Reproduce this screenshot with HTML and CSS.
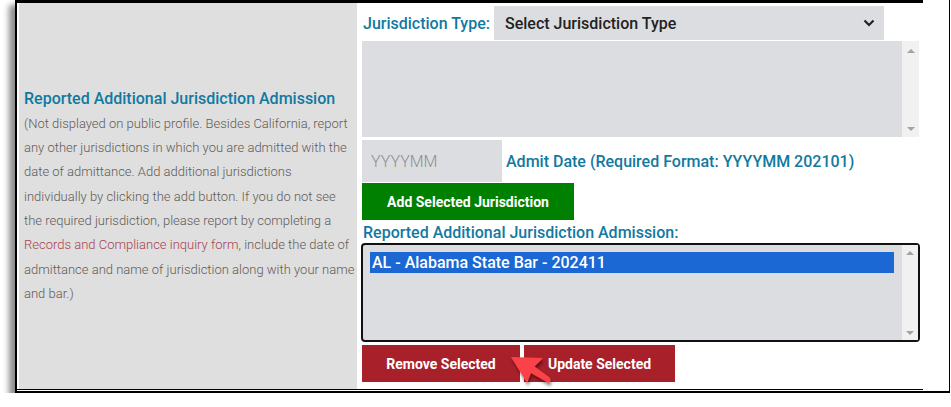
FILE: index.html
```html
<!DOCTYPE html>
<html lang="en">
<head>
    <meta charset="UTF-8">
    <meta name="viewport" content="width=device-width, initial-scale=1.0">
    <title>Additional Jurisdiction Admission</title>
    <link rel="stylesheet" href="styles.css">
</head>
<body>
    <div class="frame">
        <div class="form-table">
            <div class="form-row">
                <div class="info-cell">
                    <div class="info-title">Reported Additional Jurisdiction Admission</div>
                    <div class="info-text">
                        (Not displayed on public profile. Besides California, report any other jurisdictions in which you are admitted with the date of admittance. Add additional jurisdictions individually by clicking the add button. If you do not see the required jurisdiction, please report by completing a <a href="#" class="info-link">Records and Compliance inquiry form,</a> include the date of admittance and name of jurisdiction along with your name and bar.)
                    </div>
                </div>

                <div class="field-cell">
                    <div class="type-row">
                        <label class="field-label">Jurisdiction Type:</label>
                        <div class="fake-select">
                            <span>Select Jurisdiction Type</span>
                            <svg class="chevron" width="12" height="8" viewBox="0 0 12 8">
                                <path d="M1.5 1.5 L6 6 L10.5 1.5" fill="none" stroke="#222" stroke-width="2.2"/>
                            </svg>
                        </div>
                    </div>

                    <div class="listbox listbox-empty">
                        <div class="list-items"></div>
                        <div class="scroll-track">
                            <span class="arrow-up"></span>
                            <span class="arrow-down"></span>
                        </div>
                    </div>

                    <div class="date-row">
                        <input class="date-input" type="text" placeholder="YYYYMM">
                        <span class="field-label">Admit Date (Required Format: YYYYMM 202101)</span>
                    </div>

                    <button class="btn btn-green">Add Selected Jurisdiction</button>

                    <div class="field-label list-label">Reported Additional Jurisdiction Admission:</div>

                    <div class="listbox listbox-chosen">
                        <div class="list-items">
                            <div class="list-option selected">AL - Alabama State Bar - 202411</div>
                        </div>
                        <div class="scroll-track">
                            <span class="arrow-up"></span>
                            <span class="arrow-down"></span>
                        </div>
                    </div>

                    <div class="btn-row">
                        <button class="btn btn-red btn-remove">Remove Selected</button>
                        <button class="btn btn-red btn-update">Update Selected</button>
                        <svg class="pointer" width="52" height="42" viewBox="0 0 52 42">
                            <defs>
                                <filter id="arrowShadow" x="-30%" y="-30%" width="160%" height="160%">
                                    <feDropShadow dx="1" dy="3" stdDeviation="1.6" flood-color="#000" flood-opacity="0.45"/>
                                </filter>
                            </defs>
                            <path d="M6 5 L38 6 L29.5 14.5 L44 25 Q47.5 28.5 43.5 31 L26 21 L22 31 Z" fill="#fb434a" filter="url(#arrowShadow)"/>
                        </svg>
                    </div>
                </div>
            </div>
        </div>
    </div>
</body>
</html>
```

FILE: styles.css
```css
body {
    margin: 0;
    padding: 0 0 0 15px;
    background: #fff;
    font-family: Roboto, 'Liberation Sans', sans-serif;
}

.frame {
    box-sizing: border-box;
    width: 935px;
    height: 393px;
    background: #fff;
    border-left: 2px solid #000;
    border-right: 1px solid #000;
    border-bottom: 2px solid #000;
    box-shadow: -6px 5px 6px rgba(0, 0, 0, 0.45);
}

.form-table {
    box-sizing: border-box;
    width: 908px;
    height: 390px;
    margin-left: -2px;
    padding-left: 2px;
    border-top: 3px solid #000;
    border-bottom: 1px solid #000;
}

.form-row {
    display: grid;
    grid-template-columns: 338px 1fr;
    gap: 2px;
    height: 100%;
    padding-left: 2px;
    box-sizing: border-box;
}

.info-cell {
    background: #dfdfdf;
    padding: 0 2px 0 5px;
    display: flex;
    flex-direction: column;
    justify-content: center;
}

.info-title {
    color: #1179a0;
    font-size: 16px;
    font-weight: 500;
    line-height: 21px;
    margin: 2px 0 3px;
}

.info-text {
    color: #625b55;
    font-size: 13px;
    font-weight: 300;
    line-height: 24.3px;
}

.info-link {
    color: #a7434e;
    text-decoration: none;
}

.field-cell {
    padding: 3px 3px 0 3px;
    display: flex;
    flex-direction: column;
    align-items: flex-start;
}

.field-label {
    color: #1179a0;
    font-size: 16px;
    font-weight: 500;
}

.type-row {
    display: flex;
    align-items: center;
    height: 34px;
}

.type-row .field-label {
    margin: 0 4px 0 1px;
}

.fake-select {
    box-sizing: border-box;
    width: 390px;
    height: 34px;
    background: #dcdde0;
    display: flex;
    align-items: center;
    justify-content: space-between;
    padding: 0 9px 0 11px;
    color: #222;
    font-size: 16px;
    font-weight: 500;
}

.listbox {
    display: flex;
    background: #dcdde0;
}

.listbox-empty {
    width: 557px;
    height: 96px;
    margin-top: 1px;
}

.listbox-chosen {
    box-sizing: border-box;
    width: 559px;
    height: 99px;
    margin-left: -1px;
    border: 2px solid #111;
    border-radius: 4px;
}

.list-items {
    flex: 1;
    padding: 7px 8px 0 7px;
}

.list-option {
    height: 21px;
    line-height: 21px;
    padding-left: 2px;
    font-size: 16px;
    font-weight: 500;
}

.list-option.selected {
    background: #1b67d3;
    color: #fff;
}

.scroll-track {
    width: 17px;
    background: #f1f1f1;
    display: flex;
    flex-direction: column;
    justify-content: space-between;
    align-items: center;
    padding: 8px 0 6px;
}

.listbox-chosen .scroll-track {
    width: 16px;
    padding: 6px 0 5px;
}

.arrow-up,
.arrow-down {
    width: 0;
    height: 0;
    border-left: 4px solid transparent;
    border-right: 4px solid transparent;
}

.arrow-up {
    border-bottom: 4px solid #a3a3a3;
}

.arrow-down {
    border-top: 4px solid #a3a3a3;
}

.date-row {
    display: flex;
    align-items: center;
    margin-top: 3px;
}

.date-input {
    box-sizing: border-box;
    width: 140px;
    height: 42px;
    border: none;
    background: #dcdde0;
    padding: 0 9px;
    font-family: inherit;
    font-size: 16px;
    font-weight: 300;
    outline: none;
}

.date-input::placeholder {
    color: #8f8f8f;
}

.date-row .field-label {
    margin-left: 4px;
}

.btn {
    border: none;
    color: #fff;
    font-family: inherit;
    font-size: 14px;
    font-weight: 700;
    height: 37px;
    padding: 0;
    cursor: pointer;
}

.btn-green {
    background: #008000;
    width: 212px;
    margin-top: 1px;
}

.list-label {
    margin: 2px 0 0 1px;
    line-height: 21px;
}

.btn-row {
    position: relative;
    display: flex;
    gap: 4px;
    margin-top: 3px;
}

.btn-red {
    background: #a8202a;
}

.btn-remove {
    width: 158px;
}

.btn-update {
    width: 151px;
}

.pointer {
    position: absolute;
    left: 143px;
    top: 7px;
}
```
